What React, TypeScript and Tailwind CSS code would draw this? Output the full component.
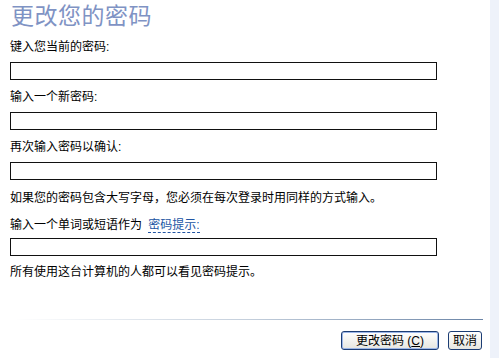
import React from 'react';

const font = '"Liberation Sans", "Noto Sans CJK SC", sans-serif';

const Field: React.FC = () => (
  <div className="w-[427px] h-[18px] border border-[#111] bg-white" />
);

export default function App() {
  return (
    <div className="flex w-[499px] h-[358px] bg-white overflow-hidden" style={{ fontFamily: font }}>
      <div className="flex-1 flex flex-col pl-[10px]">
        <h1 className="mt-[2px] ml-[1px] text-[23px] leading-[28px] font-normal text-[#7f93c4] tracking-[0.5px]">
          更改您的密码
        </h1>

        <p className="mt-[9px] text-[12px] leading-[16px] text-black">键入您当前的密码:</p>
        <div className="mt-[7px]">
          <Field />
        </div>

        <p className="mt-[9px] text-[12px] leading-[16px] text-black">输入一个新密码:</p>
        <div className="mt-[7px]">
          <Field />
        </div>

        <p className="mt-[9px] text-[12px] leading-[16px] text-black">再次输入密码以确认:</p>
        <div className="mt-[7px]">
          <Field />
        </div>

        <p className="mt-[10px] text-[12px] leading-[16px] text-black">
          如果您的密码包含大写字母，您必须在每次登录时用同样的方式输入。
        </p>

        <p className="mt-[11px] text-[12px] leading-[16px] text-black">
          输入一个单词或短语作为{' '}
          <span className="ml-[3px] text-[#2155a3] border-b border-dashed border-[#2155a3]">密码提示:</span>
        </p>
        <div className="mt-[5px]">
          <Field />
        </div>

        <p className="mt-[8px] text-[12px] leading-[16px] text-black">所有使用这台计算机的人都可以看见密码提示。</p>

        <div className="mt-[39px] ml-[5px] mr-[7px] h-px bg-gradient-to-r from-white via-[#c4cfdc] to-[#6a84a6]" />

        <div className="mt-[11px] flex justify-end gap-[9px] mr-[8px]">
          <button className="w-[98px] h-[19px] rounded-[3px] border border-[#1c3d74] bg-gradient-to-b from-white to-[#e6e6e0] text-[12px] leading-none text-black shadow-[inset_0_0_0_1px_#9cb6e8]">
            更改密码 (<span className="underline">C</span>)
          </button>
          <button className="w-[34px] h-[19px] rounded-[3px] border border-[#1c3d74] bg-gradient-to-b from-white to-[#e6e6e0] text-[12px] leading-none text-black">
            取消
          </button>
        </div>
      </div>
      <div className="w-[9px] bg-[#eef2fa]" />
    </div>
  );
}
